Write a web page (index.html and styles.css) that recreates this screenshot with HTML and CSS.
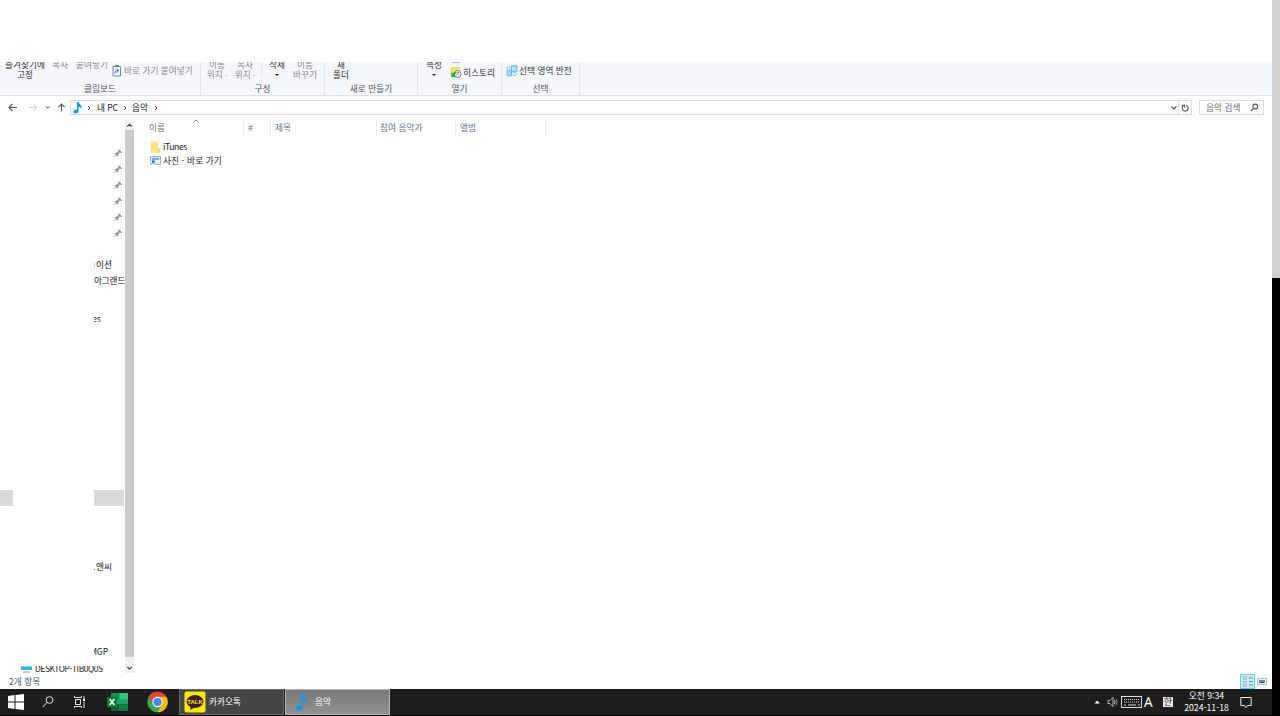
FILE: index.html
```html
<!DOCTYPE html>
<html lang="ko">
<head>
<meta charset="utf-8">
<title>음악</title>
<link rel="stylesheet" href="styles.css">
</head>
<body>
<div class="screen">
<div class="desktop">
  <main class="window">
    <div class="titlebar"></div>
    <section class="ribbon">
      <div class="group clipboard">
        <div class="tools">
          <div class="tool w50 dark">즐겨찾기에<br>고정</div>
          <div class="tool w20">복사</div>
          <div class="tool w44">붙여넣기</div>
          <div class="inline-tool paste"><svg width="10" height="12" viewBox="0 0 10 12"><path d="M1 1.5h7.5v9.5H1z" fill="#f4f8fc" stroke="#7288ad"/><path d="M3 1h4" stroke="#55698c" stroke-width="1.5"/><path d="M3 8.500c0-2 1-3 3-3M4.500 4L6.500 5.500 5 7.500" fill="none" stroke="#49689e"/></svg><span>바로 가기 붙여넣기</span></div>
        </div>
        <div class="caption">클립보드</div>
      </div>
      <div class="group organize">
        <div class="tools">
          <div class="tool w32">이동<br>위치 <i class="mini"></i></div>
          <div class="tool w24">복사<br>위치 <i class="mini"></i></div>
          <div class="bar"></div>
          <div class="tool w30 dark">삭제<br><i class="arrow"></i></div>
          <div class="tool w26">이름<br>바꾸기</div>
        </div>
        <div class="caption">구성</div>
      </div>
      <div class="group create">
        <div class="tools"><div class="tool w32 dark">새<br>폴더</div></div>
        <div class="caption">새로 만들기</div>
      </div>
      <div class="group open">
        <div class="tools">
          <div class="tool w32 dark">속성<br><i class="arrow"></i></div>
          <div class="inline-tool history dark"><svg width="12" height="17" viewBox="0 0 12 17"><path d="M2 .5h8" stroke="#a9bfdc"/><path d="M1 5.500h8.500v9.500H1z" fill="#ffe36b" stroke="#e3c547" stroke-width=".6"/><circle cx="7.500" cy="12" r="3.500" fill="#e9f2ea" stroke="#788c83"/><path d="M7 12.500l2-2.500" stroke="#555"/><path d="M1.500 9.500v5.500h5L5 13.500c0-2 1-3 2-3-2-1-4 0-4 1z" fill="#20aa43"/></svg><span>히스토리</span></div>
        </div>
        <div class="caption">열기</div>
      </div>
      <div class="group select">
        <div class="tools">
          <div class="inline-tool invert dark"><svg width="12" height="12" viewBox="0 0 12 12"><path d="M5.500.8h5.500v5.500H5.500zM1 5.800h4.500v5H1z" fill="#b5e2fa" stroke="#48aadd" stroke-width=".8"/><path d="M1 2h3v3H1zM7 7.500h3v3H7z" fill="#fff" stroke="#8ab4cf" stroke-width=".8"/></svg><span>선택 영역 반전</span></div>
        </div>
        <div class="caption">선택</div>
      </div>
    </section>
    <nav class="address-row">
      <svg class="nav-icons" width="70" height="20" viewBox="0 0 70 20" fill="none" stroke="#5a5a5a" stroke-width="1.1"><path d="M17 11.500H9M12.500 8L9 11.500l3.500 3.500"/><path d="M29 11.500h7.500M33.500 8.500l3 3-3 3" stroke="#d5d5d5"/><path d="M46 10.300l1.800 1.800 1.800-1.800" stroke="#777"/><path d="M61.500 15.500V8M58.300 11.200L61.500 8l3.200 3.200" stroke-width="1.200"/></svg>
      <div class="address">
        <svg class="note" width="10" height="13" viewBox="0 0 10 13"><path d="M4 1h1.500C5.700 3 9.500 4 8.500 8 8 6.500 7 5.900 5.500 5.700V10c0 3-5 3.200-5 .8C.5 9 2.700 8.500 4 9z" fill="#0a98ec"/></svg>
        <svg class="chev" viewBox="0 0 4 6"><path d="M1 1l2 2-2 2"/></svg><span class="pc">내 PC</span>
        <svg class="chev" viewBox="0 0 4 6"><path d="M1 1l2 2-2 2"/></svg><span class="here">음악</span>
        <svg class="chev" viewBox="0 0 4 6"><path d="M1 1l2 2-2 2"/></svg>
        <svg class="refresh" width="22" height="13" viewBox="0 0 22 13" fill="none" stroke="#555"><path d="M2.500 5.500L5 8l2.500-2.500" stroke-width="1.200"/><path d="M9.500 0v13" stroke="#ddd"/><path d="M13.800 4.700c-2 3.800 1 5.800 3 5.300 3-.7 3-4.500.5-5.500M13 4.300h2.500v2.500" stroke-width="1.100"/></svg>
      </div>
      <div class="search"><span>음악 검색</span><svg width="9" height="9" viewBox="0 0 9 9" fill="none" stroke="#555" stroke-width="1.100"><circle cx="5.300" cy="3.500" r="2.400"/><path d="M3.500 5.300L.8 8"/></svg></div>
    </nav>
    <section class="body">
      <aside class="tree">
        <svg class="pins" width="10" height="96" viewBox="0 0 10 96"><defs><g id="pin"><path d="M5.500 3.800l3 3-1 .5-1.300-.3-1.700 1.700.1 1.600-.8.700-3-3 .8-.8 1.500.1 1.700-1.800-.2-1z" fill="#8a949d" transform="translate(.7 -.4)"/><path d="M3 8.800L.8 11" stroke="#8a949d" stroke-width=".8"/></g></defs><use href="#pin"/><use href="#pin" y="16"/><use href="#pin" y="32"/><use href="#pin" y="48"/><use href="#pin" y="64"/><use href="#pin" y="80"/></svg>
        <div class="node first"><i class="stub"></i>이션</div>
        <div class="node land">아그랜드</div>
        <div class="node es"><span>es</span></div>
        <div class="selected"><i></i><b></b></div>
        <div class="node and"><i class="dot"></i>앤씨</div>
        <div class="node mgp"><span>MGP</span></div>
        <div class="computer"><svg width="11" height="7" viewBox="0 0 11 7"><path d="M0 0h11v4H0z" fill="#35aee9"/><path d="M0 0h11v1H0z" fill="#85cff3"/><path d="M2 6h7" stroke="#7799ad"/></svg><span>DESKTOP-TIB0Q0S</span></div>
      </aside>
      <div class="scroll"><svg viewBox="0 0 9 10"><path d="M2.300 6.500l2.200-2.200 2.200 2.200"/></svg><div class="thumb"></div><svg class="down" viewBox="0 0 9 16"><path d="M2.300 10l2.200 2.200L6.700 10"/></svg></div>
      <div class="files">
        <div class="headers">
          <div class="col name">이름<svg width="6" height="4" viewBox="0 0 6 4"><path d="M.5 3.500L3 1l2.500 2.500" fill="none" stroke="#777" stroke-width=".8"/></svg></div>
          <div class="col num">#</div><div class="col title">제목</div><div class="col artist">참여 음악가</div><div class="col album">앨범</div>
        </div>
        <div class="file itunes"><svg width="10" height="12" viewBox="0 0 10 12"><path d="M1 .5h7v7h1.500v4H1z" fill="#ffe38b"/><path d="M8 7.500h1.500v4H8z" fill="#edc956"/><path d="M1.300.5v11" stroke="#f5d878" stroke-width=".7"/></svg><span>iTunes</span></div>
        <div class="file photo"><svg width="11" height="10" viewBox="0 0 11 10"><path d="M.5.500h10v8H.5z" fill="#d9e6ef" stroke="#a4b1bb"/><path d="M2 2h7v4H2z" fill="#62b2e9"/><path d="M5 4h5v2H5z" fill="#eaf5fb"/><path d="M.5 5h4v4h-4z" fill="#eff4f8"/><path d="M1 8.500L4 5.500M2 5.500h2v2" stroke="#3268a0" fill="none"/></svg><span>사진 - 바로 가기</span></div>
      </div>
    </section>
    <footer class="status"><span>2개 항목</span><svg width="32" height="15" viewBox="0 0 32 15"><path d="M.5.500h14v14H.5z" fill="#c9eefb" stroke="#65cbed"/><path d="M3 3h4M3 5h4M3 7.500h4M3 10h4M3 12h4" stroke="#889ba5" stroke-width=".9"/><path d="M9 4h4M9 7.500h4M9 11h4" stroke="#6b8fa5"/><path d="M17.500 4.500h9v6h-9z" fill="#edf1f4" stroke="#b5bcc1"/><path d="M19 6h6v3h-6z" fill="#4c9bd0"/><path d="M19 9l3-1.500L25 9z" fill="#244f72"/></svg></footer>
  </main>
  <footer class="taskbar">
    <svg class="task-icons" width="179" height="26" viewBox="0 0 179 26">
      <path d="M8 7l6.500-1v6.500H8zM15.500 5.900L24 5v7.500h-8.500zM8 13.500h6.500V20L8 19zM15.500 13.500H24V21l-8.500-1z" fill="#fff"/>
      <g fill="none" stroke="#e4e4e4"><circle cx="49.500" cy="11" r="3.400"/><path d="M47 13.500L42.800 18"/><path d="M75.500 10.500h5v5h-5zM74.500 7v1.500h7V7M74.500 19v-1.500h7V19M84 7v3M84 12.500V19"/></g>
      <path d="M83 10h2v2h-2z" fill="#fff"/>
      <path d="M111 4h17v18h-17z" fill="#21a366"/><path d="M111 4h8.500v6H111z" fill="#168c50"/><path d="M119.500 4h8.500v6h-8.500z" fill="#33c481"/><path d="M111 15h8.500v7H111z" fill="#185c37"/><path d="M119.500 15h8.500v7h-8.500z" fill="#107c41"/><path d="M107 8h10v10h-10z" fill="#107c41"/><path d="M109.700 10l4.600 6M114.300 10l-4.600 6" stroke="#fff" stroke-width="1.500"/>
      <circle cx="157.500" cy="13" r="10.300" fill="#34a853"/><path d="M148.600 7.850A10.300 10.300 0 0 1 166.400 7.850H157.500L153 15.600z" fill="#ea4335"/><path d="M166.400 7.850A10.300 10.300 0 0 1 157.500 23.300L162 15.600 157.500 7.850z" fill="#fbbc05"/><circle cx="157.500" cy="13" r="5.200" fill="#fff"/><circle cx="157.500" cy="13" r="4.100" fill="#4285f4"/>
    </svg>
    <div class="task talk"><svg width="22" height="22" viewBox="0 0 22 22"><rect x=".5" y=".5" width="21" height="21" rx="2" fill="#ffeb00"/><ellipse cx="11" cy="10.500" rx="8.500" ry="6.500" fill="#3b2020"/><path d="M6 14l.5 5L11 16z" fill="#3b2020"/><text x="11" y="12.700" text-anchor="middle" class="logo-text">TALK</text></svg><span>카카오톡</span></div>
    <div class="task music"><svg width="14" height="20" viewBox="0 0 14 20"><path d="M6 1h1.500c.2 5 6 6 4 13 .2-3.500-1.200-4.500-4-5v6.500c0 4-7 4.200-7 .8 0-2.300 3.400-3.300 5.500-2.300z" fill="#0a9bf5"/></svg><span>음악</span></div>
    <div class="tray">
      <svg width="54" height="26" viewBox="0 0 54 26"><path d="M3.500 14.500l2.700-3 2.700 3z" fill="#fff"/><path d="M17 11.500h2l3-3v9l-3-3h-2z" fill="none" stroke="#ddd" stroke-width=".8"/><path d="M23.500 11q1.300 2 0 4" fill="none" stroke="#ccc"/><path d="M25 9.500q2.200 3.500 0 7" fill="none" stroke="#777"/><rect x="30.500" y="7.500" width="20" height="11" fill="none" stroke="#ddd"/><path d="M33 10.500h16M33 13h16" stroke="#ddd" stroke-dasharray="1 1"/><path d="M33 16h2M37 16h8M47 16h2" stroke="#ddd"/></svg>
      <span class="ime">A</span><span class="han">한</span>
      <div class="clock"><div>오전 9:34</div><div>2024-11-18</div></div>
      <svg width="12" height="13" viewBox="0 0 12 13"><path d="M.8 1.500h10.400v8H7.500L6 11.500 4.500 9.500H.8z" fill="none" stroke="#e5e5e5"/></svg>
    </div>
  </footer>
</div>
<div class="edge"><div class="edge-top"></div></div>
</div>
</body>
</html>
```
FILE: styles.css
```css
* { box-sizing: border-box; }
body { margin: 0; background: #000; overflow: hidden; font: 8.7px/10px "Noto Sans CJK KR", sans-serif; color: #222; }
svg { display: block; flex: none; }
span { white-space: nowrap; }
.screen { display: flex; width: 1280px; height: 716px; }
.desktop { width: 1272px; display: flex; flex-direction: column; }
.edge { width: 8px; background: #000; }
.edge-top { height: 278px; background: #d0d0d0; }
.window { height: 689px; background: #fff; display: flex; flex-direction: column; }
.titlebar { height: 62px; }

.ribbon { height: 34px; display: flex; background: #f5f8fb; border-bottom: 1px solid #dde2e6; overflow: hidden; }
.group { border-right: 1px solid #e2e6ea; }
.clipboard { width: 201px; }
.organize { width: 124px; }
.create { width: 93px; }
.open { width: 84px; }
.select { width: 78px; }
.tools { display: flex; height: 20px; overflow: hidden; color: #8b8b8b; }
.tool { flex: none; margin-top: -2px; text-align: center; white-space: nowrap; }
.dark { color: #333; }
.w50 { width: 50px; }
.w20 { width: 20px; }
.w44 { width: 44px; }
.w32 { width: 32px; }
.w24 { width: 24px; }
.w30 { width: 30px; }
.w26 { width: 26px; }
.bar { width: 1px; height: 15px; background: #e3e7eb; margin-left: 4px; }
.caption { text-align: center; line-height: 13px; color: #555; }
.arrow, .mini { display: inline-block; border: 2px solid transparent; border-top-color: #222; border-bottom: 0; vertical-align: 2px; }
.mini { border-width: 1.500px 1.500px 0; border-top-color: #999; }
.inline-tool { display: flex; gap: 2px; flex: none; }
.paste { margin-left: -2px; padding-top: 3px; }
.paste span, .invert span { margin-top: 1px; }
.history { gap: 1px; }
.history span { margin-top: 6px; }
.invert { padding: 3px 0 0 4px; gap: 1px; }

.address-row { height: 20px; display: flex; align-items: flex-start; }
.address { width: 1122px; height: 15px; margin-top: 4px; border: 1px solid #dcdcdc; display: flex; align-items: center; padding-left: 2px; line-height: 11px; }
.note { margin-right: 4px; }
.chev { width: 4px; height: 6px; fill: none; stroke: #555; stroke-width: 1; }
.pc { margin: 0 5px 0 6px; width: 21px; letter-spacing: -.1px; }
.here { margin: 0 6px 0 5px; width: 16px; }
.refresh { margin-left: auto; }
.search { width: 65px; height: 15px; margin: 4px 0 0 7px; border: 1px solid #dcdcdc; display: flex; justify-content: space-between; align-items: center; padding: 0 4px 0 6px; color: #707070; }

.body { height: 558px; display: flex; padding-top: 4px; }
.tree { width: 125px; overflow: hidden; display: flex; flex-direction: column; }
.tree > * { flex: none; }
.pins { margin: 26px 0 0 113px; }
.node { height: 16px; line-height: 16px; margin-left: 94px; white-space: nowrap; overflow: hidden; }
.first { margin-top: 15px; display: flex; align-items: center; }
.stub { width: 1px; height: 6px; background: #d5d5d5; margin-right: 1px; }
.land { letter-spacing: -.2px; }
.es { margin-top: 22px; }
.es span { margin-left: -2px; }
.selected { display: flex; justify-content: space-between; height: 16px; margin-top: 163px; padding-right: 1px; }
.selected i { width: 13px; background: #d9d9d9; }
.selected b { width: 30px; background: #d9d9d9; }
.and { margin-top: 53px; display: flex; align-items: center; }
.dot { width: 1px; height: 1px; background: #777; margin: 5px 1px 0 0; }
.mgp { margin-top: 69px; letter-spacing: -.2px; }
.mgp span { margin-left: -4px; }
.computer { display: flex; height: 7px; margin: 6px 0 0 21px; overflow: hidden; gap: 3px; }
.computer span { margin-top: -3px; font-size: 8.400px; letter-spacing: -.4px; }
.scroll { width: 9px; display: flex; flex-direction: column; }
.scroll svg { width: 9px; height: 10px; background: #f1f1f1; fill: none; stroke: #444; stroke-width: 1.200; }
.scroll .down { height: 16px; }
.thumb { height: 527px; background: #cbcbcb; }

.files { flex: 1; }
.headers { display: flex; height: 16px; color: #65758a; line-height: 15px; }
.col { border-right: 1px solid #ececec; }
.name { width: 110px; padding-left: 15px; display: flex; }
.name svg { margin: -1px 0 0 28px; }
.num { width: 27px; padding-left: 4px; }
.title { width: 106px; padding-left: 4px; }
.artist { width: 79px; padding-left: 3px; }
.album { width: 90px; padding-left: 4px; }
.file { display: flex; align-items: center; gap: 2px; height: 14px; padding-left: 16px; }
.itunes { margin-top: 4px; gap: 3px; }
.itunes span { letter-spacing: -.45px; }
.photo { letter-spacing: .05px; }
.status { height: 15px; display: flex; justify-content: space-between; padding-left: 9px; line-height: 15px; color: #40566a; }

.taskbar { height: 27px; display: flex; background: #1d1d1d; border-bottom: 1px solid #000; color: #fff; }
.task { width: 105px; height: 26px; margin-right: 1px; display: flex; align-items: center; border: 1px solid #696969; background: #454545; }
.talk { padding-left: 4px; gap: 3px; }
.music { background: linear-gradient(#777, #929292); border-color: #b5b5b5; padding-left: 9px; gap: 6px; }
.logo-text { font: bold 6px "Liberation Sans", sans-serif; fill: #ffeb00; }
.tray { margin-left: auto; display: flex; align-items: center; padding-right: 20px; }
.tray > svg:first-child { margin-right: -1px; }
.ime { font: 13.500px/26px "Noto Sans", sans-serif; width: 19px; }
.han { width: 10px; height: 10px; background: #eee; color: #222; line-height: 9px; font-size: 9px; text-align: center; }
.clock { width: 67px; text-align: center; line-height: 12px; }
```
